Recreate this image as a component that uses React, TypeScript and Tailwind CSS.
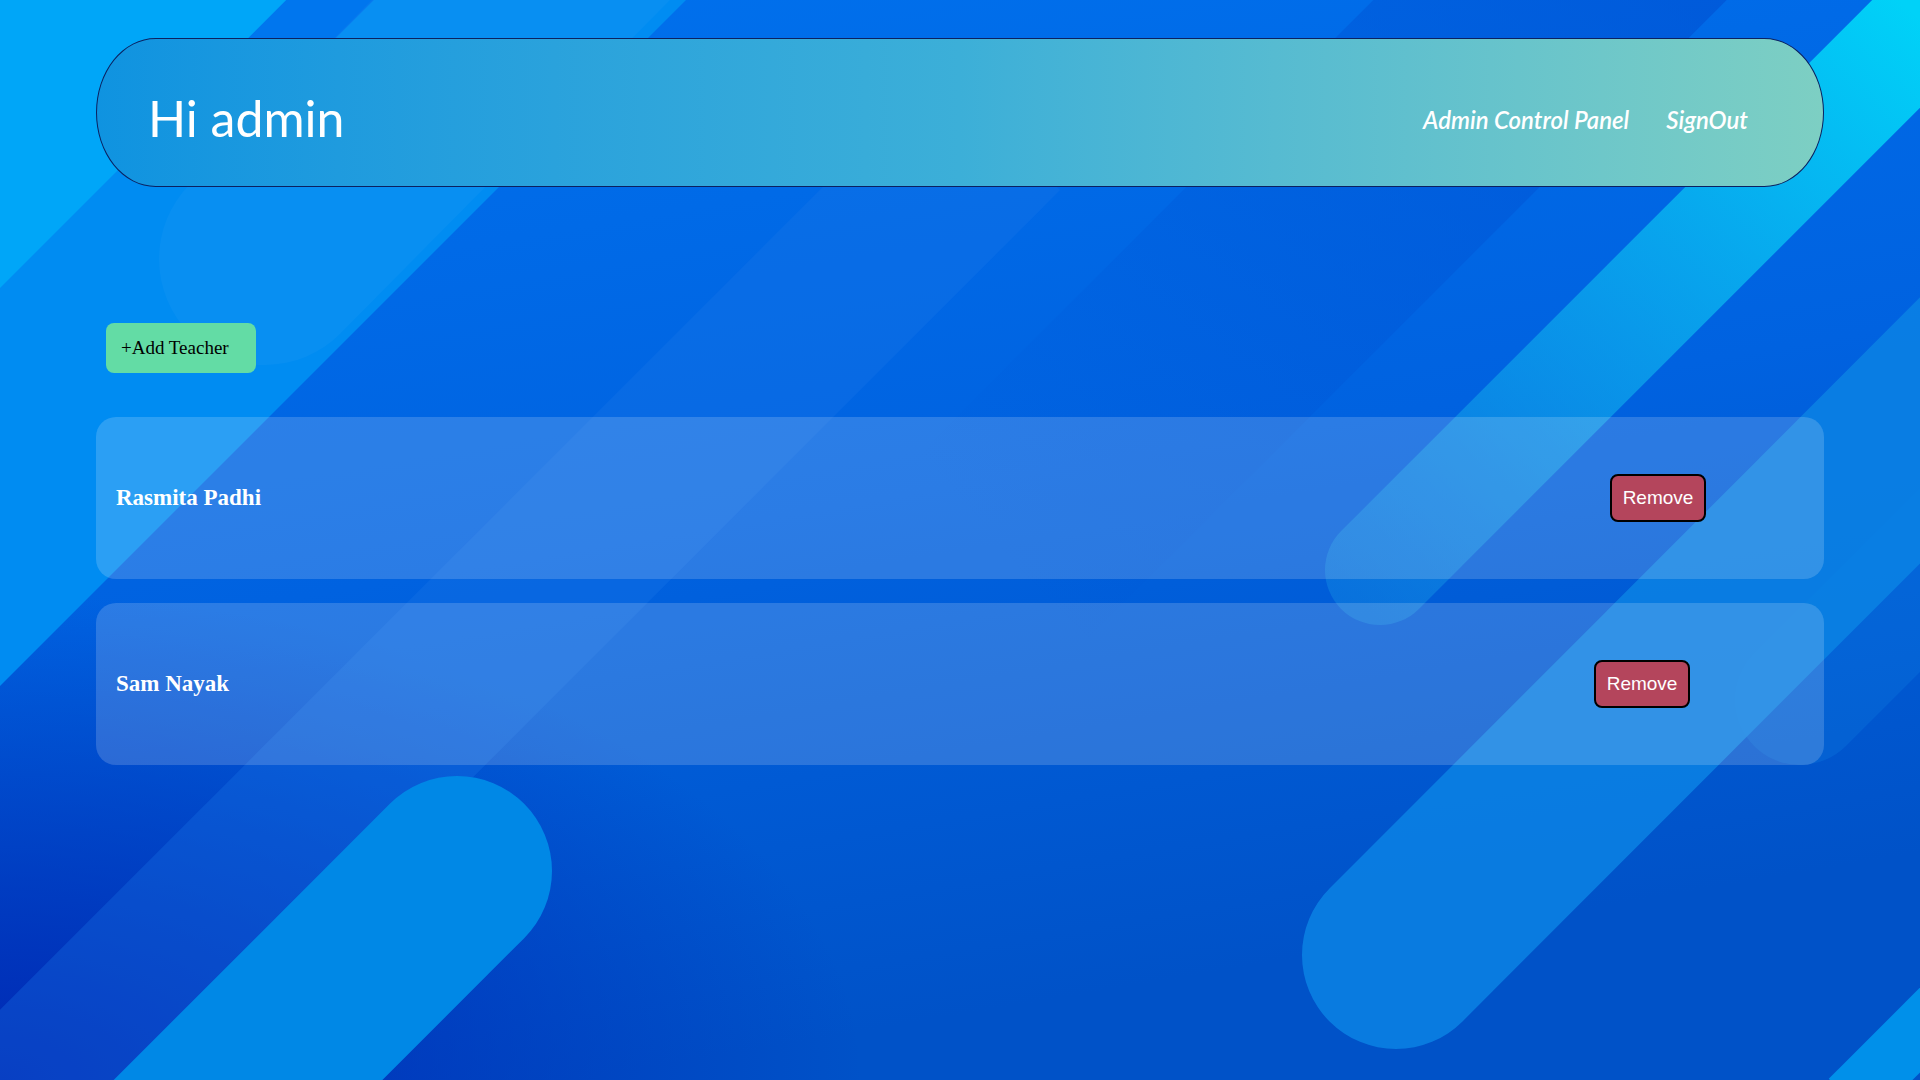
import React from "react";

const teachers = [
  { id: 1, name: "Rasmita Padhi" },
  { id: 2, name: "Sam Nayak" },
];

function Backdrop() {
  return (
    <svg
      className="absolute inset-0 w-full h-full"
      viewBox="0 0 1920 1080"
      preserveAspectRatio="none"
    >
      <defs>
        <linearGradient id="base" x1="0" y1="0" x2="0.3" y2="1">
          <stop offset="0" stopColor="#0072ee" />
          <stop offset="0.55" stopColor="#0062e0" />
          <stop offset="1" stopColor="#0052c8" />
        </linearGradient>
        <radialGradient id="corner" cx="0" cy="1" r="0.45">
          <stop offset="0" stopColor="#0028b4" />
          <stop offset="1" stopColor="#0028b4" stopOpacity="0" />
        </radialGradient>
        <linearGradient id="cyan" gradientUnits="userSpaceOnUse" x1="1900" y1="0" x2="1350" y2="600">
          <stop offset="0" stopColor="#00d2f8" />
          <stop offset="1" stopColor="#1a9ae6" stopOpacity="0.35" />
        </linearGradient>
        <linearGradient id="dark" gradientUnits="userSpaceOnUse" x1="1700" y1="0" x2="1000" y2="560">
          <stop offset="0" stopColor="#0050d2" stopOpacity="0.6" />
          <stop offset="1" stopColor="#0050d2" stopOpacity="0" />
        </linearGradient>
      </defs>
      <rect width="1920" height="1080" fill="url(#base)" />
      <rect width="1920" height="1080" fill="url(#corner)" />

      {/* top left bands */}
      <polygon points="0,0 686,0 0,686" fill="#008cf2" />
      <polygon points="0,0 288,0 0,288" fill="#00a6f8" />
      <line x1="430" y1="-100" x2="190" y2="140" stroke="#0076ee" strokeWidth="62" strokeLinecap="round" />
      <line x1="600" y1="-80" x2="265" y2="259" stroke="#ffffff" strokeOpacity="0.03" strokeWidth="212" strokeLinecap="round" />

      {/* light stripe through the middle left */}
      <line x1="1000" y1="130" x2="-100" y2="1230" stroke="#1a78e8" strokeOpacity="0.3" strokeWidth="170" />

      {/* dark stripe top middle, fading out */}
      <line x1="1800" y1="-250" x2="1000" y2="550" stroke="url(#dark)" strokeWidth="250" />

      {/* right cyan bands */}
      <line x1="2200" y1="-250" x2="1380" y2="570" stroke="url(#cyan)" strokeWidth="110" strokeLinecap="round" />
      <line x1="2450" y1="50" x2="1800" y2="700" stroke="#1690ea" strokeOpacity="0.2" strokeWidth="130" strokeLinecap="round" />

      {/* bottom pills */}
      <line x1="1396" y1="955" x2="2250" y2="100" stroke="#0a82e4" strokeOpacity="0.85" strokeWidth="188" strokeLinecap="round" />
      <line x1="457" y1="871" x2="-200" y2="1528" stroke="#0088e6" strokeWidth="190" strokeLinecap="round" />
      <line x1="2100" y1="850" x2="1850" y2="1100" stroke="#0090ea" strokeWidth="60" />
    </svg>
  );
}

export default function App() {
  return (
    <div className="relative h-[1080px] w-full overflow-hidden">
      <Backdrop />

      <div className="relative px-[96px] pt-[38px]">
        {/* Header */}
        <header className="h-[149px] flex items-center justify-between pl-[51px] pr-[75px] rounded-[60px/75px] border border-[#0b2160] bg-gradient-to-r from-[#0f93e0] via-[#3cafd8] to-[#7dcfc3]">
          <h1 className="text-[50px] text-white font-['Lato',sans-serif] font-normal leading-none pt-[10px]">
            Hi admin
          </h1>
          <nav className="flex items-center gap-[37px] pt-[14px] font-['Lato',sans-serif] italic font-semibold text-[24px] text-white">
            <a href="#">Admin Control Panel</a>
            <a href="#">SignOut</a>
          </nav>
        </header>

        {/* Add teacher */}
        <button className="mt-[136px] ml-[10px] w-[150px] h-[50px] rounded-lg bg-[#63dca5] pl-[15px] text-left text-[19px] text-black font-['Liberation_Serif',serif]">
          +Add Teacher
        </button>

        {/* Teacher list */}
        <div className="mt-[44px] flex flex-col gap-[24px]">
          {teachers.map((t) => (
            <div
              key={t.id}
              className="h-[162px] flex items-center pl-5 rounded-[20px] bg-white/[0.17]"
            >
              <h3 className="shrink-0 text-[23px] font-bold text-white font-['Liberation_Serif',serif]">
                {t.name}
              </h3>
              <div className="ml-[1231px] flex-1 flex justify-center">
                <button className="h-[48px] px-[11px] rounded-lg border-2 border-black bg-[#b4455c] text-white text-[19px] font-['Liberation_Sans',Arial,sans-serif]">
                  Remove
                </button>
              </div>
            </div>
          ))}
        </div>
      </div>
    </div>
  );
}
